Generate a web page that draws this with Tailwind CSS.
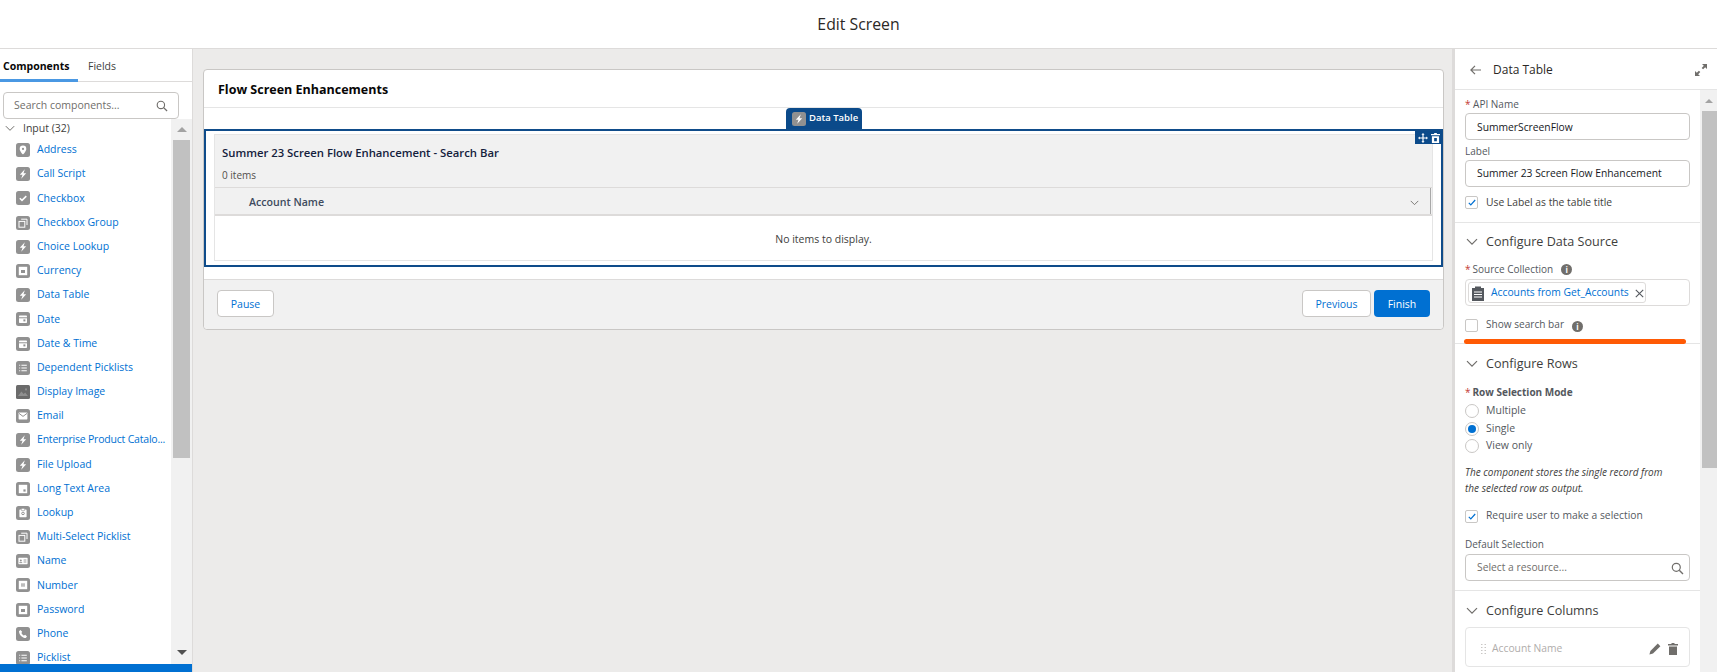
<!DOCTYPE html>
<html>
<head>
<meta charset="utf-8">
<script src="https://cdn.jsdelivr.net/npm/@tailwindcss/browser@4"></script>
<title>Edit Screen</title>
</head>
<body class="w-[1717px] h-[672px] overflow-hidden bg-white font-['Open_Sans',sans-serif] text-[10.5px] text-[#3e3e3c]">

<!-- hidden icon defs -->
<svg class="hidden">
  <symbol id="bolt" viewBox="0 0 14 14"><rect width="14" height="14" rx="2.5" fill="#919191"/><path d="M8.800 2.200 3.800 7.800h2.700L5.200 11.800 10.200 6.200H7.500z" fill="#fff"/></symbol>
  <symbol id="pin" viewBox="0 0 14 14"><rect width="14" height="14" rx="2.5" fill="#919191"/><path d="M7 2.6a3.3 3.3 0 0 0-3.3 3.3C3.700 8.300 7 11.400 7 11.400s3.300-3.100 3.300-5.500A3.300 3.300 0 0 0 7 2.600z" fill="#fff"/><circle cx="7" cy="5.900" r="1.100" fill="#919191"/></symbol>
  <symbol id="check" viewBox="0 0 14 14"><rect width="14" height="14" rx="2.500" fill="#919191"/><path d="m3.800 7.200 2.200 2.200 4.300-4.300" fill="none" stroke="#fff" stroke-width="1.500"/></symbol>
  <symbol id="group" viewBox="0 0 14 14"><rect width="14" height="14" rx="2.500" fill="#919191"/><rect x="3" y="5.400" width="5.800" height="5.800" fill="#919191" stroke="#fff"/><path d="M5.200 3.200h5.800v5.800" fill="none" stroke="#fff"/></symbol>
  <symbol id="box" viewBox="0 0 14 14"><rect width="14" height="14" rx="2.500" fill="#919191"/><rect x="2.800" y="2.800" width="8.400" height="8.400" fill="#fff"/><rect x="5" y="6" width="4" height="3" fill="#919191"/></symbol>
  <symbol id="corner" viewBox="0 0 14 14"><rect width="14" height="14" rx="2.500" fill="#919191"/><rect x="2.800" y="2.800" width="8.400" height="8.400" fill="#fff"/><rect x="7.400" y="7.400" width="2.200" height="2.200" fill="#919191"/></symbol>
  <symbol id="cal" viewBox="0 0 14 14"><rect width="14" height="14" rx="2.500" fill="#919191"/><rect x="3" y="3.400" width="8" height="7.600" rx=".8" fill="#fff"/><path d="M3 5.800h8" stroke="#919191"/><rect x="7.400" y="7.400" width="2" height="2" fill="#919191"/></symbol>
  <symbol id="list" viewBox="0 0 14 14"><rect width="14" height="14" rx="2.500" fill="#919191"/><path d="M5.400 4.300h5.400M5.400 7h5.400M5.400 9.700h5.400M3.200 4.300h1M3.200 7h1M3.200 9.700h1" stroke="#fff" stroke-width="1.100"/></symbol>
  <symbol id="image" viewBox="0 0 14 14"><rect width="14" height="14" rx="1.500" fill="#6b6b6b"/><path d="m2 11 3.400-4.400 2.200 2.400 1.600-1.600L12 11z" fill="#8f8f8f"/><circle cx="10" cy="4.400" r="1.100" fill="#8f8f8f"/></symbol>
  <symbol id="mail" viewBox="0 0 14 14"><rect width="14" height="14" rx="2.500" fill="#919191"/><rect x="2.600" y="3.600" width="8.800" height="6.800" rx=".6" fill="#fff"/><path d="m3 4.400 4 3 4-3" fill="none" stroke="#919191"/></symbol>
  <symbol id="clip" viewBox="0 0 14 14"><rect width="14" height="14" rx="2.500" fill="#919191"/><rect x="3.400" y="3.400" width="7.200" height="7.800" rx=".6" fill="#fff"/><rect x="5.200" y="2.400" width="3.600" height="2" fill="#fff" stroke="#919191" stroke-width=".5"/><circle cx="7" cy="7.400" r="1.300" fill="none" stroke="#919191"/></symbol>
  <symbol id="card" viewBox="0 0 14 14"><rect width="14" height="14" rx="2.500" fill="#919191"/><rect x="2.400" y="3.800" width="9.200" height="6.400" rx=".6" fill="#fff"/><circle cx="4.800" cy="6.400" r="1" fill="#919191"/><path d="M3.400 8.600h2.800M7.600 6h2.800M7.600 8h2.800" stroke="#919191" stroke-width=".9"/></symbol>
  <symbol id="num" viewBox="0 0 14 14"><rect width="14" height="14" rx="2.500" fill="#919191"/><rect x="2.800" y="2.800" width="8.400" height="8.400" fill="#fff"/><path d="M6 5v4M8 5v4M5 6.200h4M5 7.800h4" stroke="#919191" stroke-width=".6"/></symbol>
  <symbol id="phone" viewBox="0 0 14 14"><rect width="14" height="14" rx="2.500" fill="#919191"/><path d="M4.400 3 3 4.200c0 3.600 3.200 6.800 6.800 6.800L11 9.600 9.200 7.800 8 8.600C7 8.200 5.800 7 5.400 6l.8-1.200z" fill="#fff"/></symbol>
  <symbol id="search" viewBox="0 0 14 14"><circle cx="5.700" cy="5.700" r="4.300" fill="none" stroke="#706e6b" stroke-width="1.300"/><path d="m8.900 8.900 4 4" stroke="#706e6b" stroke-width="1.500"/></symbol>
  <symbol id="chev" viewBox="0 0 12 8"><path d="m1 1.200 5 5 5-5" fill="none" stroke="#706e6b" stroke-width="1.200"/></symbol>
</svg>

<!-- top title -->
<header class="h-[49px] pt-[2px] flex items-center justify-center border-b border-[#dddbda] text-[15.8px] text-[#2b2826]">Edit Screen</header>

<div class="flex h-[623px]">

  <!-- left panel -->
  <aside class="w-[192px] shrink-0 bg-white flex flex-col relative">
    <div class="h-[33px] flex border-b border-[#dddbda] text-[10.5px]">
      <div class="w-[78px] pl-[3px] font-bold text-[#080707] border-b-[3px] border-[#4a98e3] h-[33px] leading-[34px]">Components</div>
      <div class="pl-[10px] leading-[34px] text-[#3e3e3c]">Fields</div>
    </div>
    <div class="mx-[3px] mt-[10px] h-[27px] w-[176px] border border-[#c9c7c5] rounded-[4px] flex items-center justify-between pt-[1px] pl-[10px] pr-[10px] text-[10.5px] text-[#706e6b]">
      <span>Search components...</span>
      <svg class="w-[12px] h-[12px]"><use href="#search"/></svg>
    </div>
    <div class="flex flex-1 min-h-0">
      <ul class="flex-1 min-w-0 overflow-hidden text-[#0070d2]">
        <li class="h-[19px] flex items-center text-[#3e3e3c]"><svg class="ml-[5px] w-[10px] h-[7px]"><use href="#chev"/></svg><span class="ml-[8px]">Input (32)</span></li>
        <li class="h-[24.2px] flex items-center pl-[16px] gap-[7px]"><svg class="w-[14px] h-[14px]"><use href="#pin"/></svg>Address</li>
        <li class="h-[24.2px] flex items-center pl-[16px] gap-[7px]"><svg class="w-[14px] h-[14px]"><use href="#bolt"/></svg>Call Script</li>
        <li class="h-[24.2px] flex items-center pl-[16px] gap-[7px]"><svg class="w-[14px] h-[14px]"><use href="#check"/></svg>Checkbox</li>
        <li class="h-[24.2px] flex items-center pl-[16px] gap-[7px]"><svg class="w-[14px] h-[14px]"><use href="#group"/></svg>Checkbox Group</li>
        <li class="h-[24.2px] flex items-center pl-[16px] gap-[7px]"><svg class="w-[14px] h-[14px]"><use href="#bolt"/></svg>Choice Lookup</li>
        <li class="h-[24.2px] flex items-center pl-[16px] gap-[7px]"><svg class="w-[14px] h-[14px]"><use href="#box"/></svg>Currency</li>
        <li class="h-[24.2px] flex items-center pl-[16px] gap-[7px]"><svg class="w-[14px] h-[14px]"><use href="#bolt"/></svg>Data Table</li>
        <li class="h-[24.2px] flex items-center pl-[16px] gap-[7px]"><svg class="w-[14px] h-[14px]"><use href="#cal"/></svg>Date</li>
        <li class="h-[24.2px] flex items-center pl-[16px] gap-[7px]"><svg class="w-[14px] h-[14px]"><use href="#cal"/></svg>Date &amp; Time</li>
        <li class="h-[24.2px] flex items-center pl-[16px] gap-[7px]"><svg class="w-[14px] h-[14px]"><use href="#list"/></svg>Dependent Picklists</li>
        <li class="h-[24.2px] flex items-center pl-[16px] gap-[7px]"><svg class="w-[14px] h-[14px]"><use href="#image"/></svg>Display Image</li>
        <li class="h-[24.2px] flex items-center pl-[16px] gap-[7px]"><svg class="w-[14px] h-[14px]"><use href="#mail"/></svg>Email</li>
        <li class="h-[24.2px] flex items-center pl-[16px] gap-[7px] tracking-[-0.2px] whitespace-nowrap"><svg class="w-[14px] h-[14px]"><use href="#bolt"/></svg>Enterprise Product Catalo...</li>
        <li class="h-[24.2px] flex items-center pl-[16px] gap-[7px]"><svg class="w-[14px] h-[14px]"><use href="#bolt"/></svg>File Upload</li>
        <li class="h-[24.2px] flex items-center pl-[16px] gap-[7px]"><svg class="w-[14px] h-[14px]"><use href="#corner"/></svg>Long Text Area</li>
        <li class="h-[24.2px] flex items-center pl-[16px] gap-[7px]"><svg class="w-[14px] h-[14px]"><use href="#clip"/></svg>Lookup</li>
        <li class="h-[24.2px] flex items-center pl-[16px] gap-[7px]"><svg class="w-[14px] h-[14px]"><use href="#group"/></svg>Multi-Select Picklist</li>
        <li class="h-[24.2px] flex items-center pl-[16px] gap-[7px]"><svg class="w-[14px] h-[14px]"><use href="#card"/></svg>Name</li>
        <li class="h-[24.2px] flex items-center pl-[16px] gap-[7px]"><svg class="w-[14px] h-[14px]"><use href="#num"/></svg>Number</li>
        <li class="h-[24.2px] flex items-center pl-[16px] gap-[7px]"><svg class="w-[14px] h-[14px]"><use href="#box"/></svg>Password</li>
        <li class="h-[24.2px] flex items-center pl-[16px] gap-[7px]"><svg class="w-[14px] h-[14px]"><use href="#phone"/></svg>Phone</li>
        <li class="h-[24.2px] flex items-center pl-[16px] gap-[7px]"><svg class="w-[14px] h-[14px]"><use href="#list"/></svg>Picklist</li>
      </ul>
      <!-- scrollbar -->
      <div class="w-[21px] shrink-0 bg-[#f1f1f1] flex flex-col items-center px-[2px]">
        <div class="h-[21px] flex items-center"><div class="w-0 h-0 border-x-[5px] border-x-transparent border-b-[5px] border-b-[#a3a3a3]"></div></div>
        <div class="w-[17px] h-[318px] bg-[#c1c1c1]"></div>
        <div class="flex-1"></div>
        <div class="h-[22px]"><div class="w-0 h-0 border-x-[5px] border-x-transparent border-t-[5px] border-t-[#505050]"></div></div>
      </div>
    </div>
    <div class="absolute bottom-0 left-0 w-[192px] h-[8px] bg-[#0070d2]"></div>
  </aside>

  <!-- canvas -->
  <main class="flex-1 min-w-0 bg-[#ecebea] border-l border-[#dddbda] pl-[10px] pt-[20px]">
    <div class="w-[1241px] rounded-[4px] border border-[#c9c7c5] bg-white">
      <div class="h-[38px] pt-[3px] border-b border-[#e5e5e5] pl-[14px] flex items-center text-[12.5px] font-bold text-[#080707]">Flow Screen Enhancements</div>
      <div class="relative h-[21px]">
        <div class="absolute left-[582px] top-0 h-[21px] w-[76px] rounded-t-[4px] bg-[#0b4a8a] text-white text-[9.5px] font-semibold flex items-center pl-[6px] gap-[3px]"><svg class="w-[14px] h-[14px]"><use href="#bolt"/></svg>Data Table</div>
      </div>
      <div class="relative border-2 border-[#0f4c8a] h-[138px] pt-[3px] px-[8px]">
        <div class="absolute right-[-1px] top-0 w-[27px] h-[13px] bg-[#0b4a8a] flex items-center justify-center gap-[3px]">
          <svg class="w-[10px] h-[10px]" viewBox="0 0 10 10"><path d="M5 0 3.400 1.800h1v2.600H1.800v-1L0 5l1.800 1.600v-1h2.600v2.600h-1L5 10l1.600-1.800h-1V5.600h2.600v1L10 5 8.200 3.400v1H5.600V1.800h1z" fill="#fff"/></svg>
          <svg class="w-[9px] h-[10px]" viewBox="0 0 10 11"><path fill-rule="evenodd" d="M3.500 0h3v1H10v1.500H0V1h3.500zM1 3.500h8V11H1zM3.500 5.500v3.500h3V5.500z" fill="#fff"/></svg>
        </div>
        <div class="border border-[#e5e5e5] h-[127px] flex flex-col">
          <div class="bg-[#f1f1f1] h-[52px] pl-[7px] pt-[11px] shrink-0">
            <div class="text-[11.3px] font-semibold leading-[14px] text-[#14213d]">Summer 23 Screen Flow Enhancement - Search Bar</div>
            <div class="mt-[9px] text-[10px] leading-[12px] text-[#514f4d]">0 items</div>
          </div>
          <div class="h-[29px] shrink-0 bg-[#f1f1f1] border-t border-t-[#dddbda] border-b-2 border-b-[#dddbda] flex items-center">
            <div class="flex-1 h-full flex items-center justify-between pt-[3px] pl-[34px] pr-[11px] mr-[1px] border-r border-r-[#a8a8a8] text-[10.6px] font-semibold text-[#3e4b5e]">
              <span>Account Name</span>
              <svg class="w-[9px] h-[6px]"><use href="#chev"/></svg>
            </div>
          </div>
          <div class="flex-1 pt-[4px] flex items-center justify-center text-[10.5px] text-[#3e3e3c]">No items to display.</div>
        </div>
      </div>
      <div class="mt-[12px] h-[50px] bg-[#f1f1f1] border-t border-[#dddbda] rounded-b-[4px] px-[13px] pt-[10px] flex items-start justify-between">
        <div class="w-[57px] h-[27px] pt-[3px] bg-white border border-[#c9c7c5] rounded-[4px] flex items-center justify-center text-[10.5px] text-[#0070d2]">Pause</div>
        <div class="flex gap-[3px]">
          <div class="w-[69px] h-[27px] pt-[3px] bg-white border border-[#c9c7c5] rounded-[4px] flex items-center justify-center text-[10.5px] text-[#0070d2]">Previous</div>
          <div class="w-[56px] h-[27px] pt-[3px] bg-[#0070d2] rounded-[4px] flex items-center justify-center text-[10.5px] text-white">Finish</div>
        </div>
      </div>
    </div>
  </main>

  <!-- right panel -->
  <aside class="w-[265px] shrink-0 bg-white border-l-[3px] border-[#dddbda] flex flex-col">
    <div class="h-[41px] pt-[1px] shrink-0 border-b border-[#e5e5e5] flex items-center justify-between pl-[15px] pr-[10px]">
      <div class="flex items-center gap-[12px] text-[12px] text-[#2b2826]">
        <svg class="w-[11px] h-[10px]" viewBox="0 0 11 10"><path d="M5 .8.9 5 5 9.200M1 5h10" fill="none" stroke="#706e6b" stroke-width="1.200"/></svg>
        Data Table
      </div>
      <svg class="w-[12px] h-[12px]" viewBox="0 0 12 12"><path d="M7 0h5v5l-1.800-1.800-2.100 2.100-1.400-1.400 2.100-2.100zM5 12H0V7l1.800 1.800 2.100-2.100 1.400 1.400-2.100 2.100z" fill="#706e6b"/></svg>
    </div>
    <div class="flex flex-1 min-h-0">
      <div class="flex-1 min-w-0 overflow-hidden">
        <div class="h-[133px] px-[10px] pt-[7px] border-b border-[#e5e5e5]">
          <div class="text-[10px] leading-[14px] text-[#54585e]"><span class="text-[#c23934]">* </span>API Name</div>
          <div class="mt-[2px] h-[27px] pt-[2px] border border-[#c9c7c5] rounded-[4px] pl-[11px] flex items-center text-[10.3px] text-[#16181d]">SummerScreenFlow</div>
          <div class="mt-[4px] text-[10px] leading-[14px] text-[#54585e]">Label</div>
          <div class="mt-[2px] h-[27px] border border-[#c9c7c5] rounded-[4px] pl-[11px] flex items-center text-[10.3px] text-[#16181d] whitespace-nowrap">Summer 23 Screen Flow Enhancement</div>
          <div class="mt-[9px] flex items-center gap-[8px] text-[10.3px] h-[13px]">
            <span class="w-[13px] h-[13px] border border-[#c9c7c5] rounded-[2px] flex items-center justify-center"><svg class="w-[8px] h-[7px]" viewBox="0 0 8 7"><path d="m.8 3.800 2 2 4.400-4.800" fill="none" stroke="#0070d2" stroke-width="1.200"/></svg></span>
            Use Label as the table title
          </div>
        </div>
        <div class="relative h-[121px] px-[10px] pt-[10px] border-b border-[#e5e5e5]">
          <div class="flex items-center gap-[8px] text-[12.6px] leading-[18px] text-[#3e3e3c]"><svg class="ml-[1px] w-[12px] h-[8px]"><use href="#chev"/></svg>Configure Data Source</div>
          <div class="mt-[11px] flex items-center text-[10px] leading-[14px] text-[#54585e]"><span class="text-[#c23934] mr-[2px]">*</span>Source Collection<span class="ml-[8px] w-[11px] h-[11px] rounded-full bg-[#706e6b] text-white text-[8px] leading-[11px] font-bold text-center">i</span></div>
          <div class="mt-[3px] h-[27px] border border-[#dddbda] rounded-[4px] flex items-center pl-[2px]">
            <div class="h-[21px] w-[178px] pt-[1px] border border-[#dddbda] rounded-[3px] flex items-center pl-[2px] text-[10.3px] text-[#0070d2]">
              <svg class="w-[14px] h-[15px] shrink-0 mr-[6px]" viewBox="0 0 14 15"><path d="M1 2h3V.6h6V2h3v13H1z" fill="#54585e"/><path d="M3 6h8M3 8.500h8M3 11h8" stroke="#fff"/></svg>
              <span class="whitespace-nowrap">Accounts from Get_Accounts</span>
              <svg class="ml-[6px] w-[9px] h-[9px] shrink-0" viewBox="0 0 9 9"><path d="m.8.8 7.400 7.400M8.200.8.800 8.200" stroke="#54585e" stroke-width="1.100"/></svg>
            </div>
          </div>
          <div class="mt-[12px] flex items-center gap-[8px] text-[10.1px] h-[14px] text-[#54585e]">
            <span class="w-[13px] h-[13px] border border-[#c9c7c5] rounded-[2px]"></span>
            Show search bar
            <span class="mt-[2px] w-[11px] h-[11px] rounded-full bg-[#706e6b] text-white text-[8px] leading-[11px] font-bold text-center">i</span>
          </div>
          <div class="absolute left-[9px] bottom-[-1px] w-[222px] h-[5px] rounded-full bg-[#ff5a05]"></div>
        </div>
        <div class="h-[247px] px-[10px] pt-[11px] border-b border-[#e5e5e5]">
          <div class="flex items-center gap-[8px] text-[12.6px] leading-[18px]"><svg class="ml-[1px] w-[12px] h-[8px]"><use href="#chev"/></svg>Configure Rows</div>
          <div class="mt-[12px] text-[10px] leading-[14px] font-bold text-[#54585e]"><span class="text-[#c23934] font-normal mr-[2px]">*</span>Row Selection Mode</div>
          <div class="mt-[3px] flex items-center gap-[7px] h-[18px]"><span class="w-[14px] h-[14px] rounded-full border border-[#c9c7c5]"></span><span class="text-[#54585e]">Multiple</span></div>
          <div class="flex items-center gap-[7px] h-[18px]"><span class="w-[14px] h-[14px] rounded-full border border-[#c9c7c5] flex items-center justify-center"><span class="w-[8px] h-[8px] rounded-full bg-[#0070d2]"></span></span><span class="text-[#54585e]">Single</span></div>
          <div class="flex items-center gap-[7px] h-[16px]"><span class="w-[14px] h-[14px] rounded-full border border-[#c9c7c5]"></span><span class="text-[#54585e]">View only</span></div>
          <p class="mt-[10px] text-[10px] leading-[16px] italic text-[#3e3e3c] whitespace-nowrap">The component stores the single record from<br>the selected row as output.</p>
          <div class="mt-[13px] flex items-center gap-[8px] h-[14px] text-[10.3px] text-[#54585e]">
            <span class="w-[13px] h-[13px] border border-[#c9c7c5] rounded-[2px] flex items-center justify-center"><svg class="w-[8px] h-[7px]" viewBox="0 0 8 7"><path d="m.8 3.800 2 2 4.400-4.800" fill="none" stroke="#0070d2" stroke-width="1.200"/></svg></span>
            Require user to make a selection
          </div>
          <div class="mt-[14px] text-[10px] leading-[14px] text-[#54585e]">Default Selection</div>
          <div class="mt-[3px] h-[27px] pt-[1px] border border-[#c9c7c5] rounded-[4px] pl-[11px] pr-[5px] flex items-center justify-between text-[10.3px] text-[#706e6b]">Select a resource...<svg class="w-[13px] h-[13px]"><use href="#search"/></svg></div>
        </div>
        <div class="px-[10px] pt-[11px]">
          <div class="flex items-center gap-[8px] text-[12.6px] leading-[18px]"><svg class="ml-[1px] w-[12px] h-[8px]"><use href="#chev"/></svg>Configure Columns</div>
          <div class="mt-[7px] h-[40px] pt-[4px] border border-[#e5e5e5] rounded-[4px] flex items-center pl-[15px] pr-[11px] justify-between text-[10.3px] text-[#b0adab]">
            <span class="flex items-center gap-[6px]">
              <svg class="w-[5px] h-[10px]" viewBox="0 0 5 10"><path d="M0 .5h1.500M3.500.5H5M0 3.500h1.500M3.500 3.500H5M0 6.500h1.500M3.500 6.500H5M0 9.500h1.500M3.500 9.500H5" stroke="#c9c7c5"/></svg>
              Account Name
            </span>
            <span class="flex items-center gap-[7px]">
              <svg class="w-[12px] h-[12px]" viewBox="0 0 12 12"><path d="M8.800.6 11.400 3.200 4 10.600.4 11.600 1.400 8z" fill="#706e6b"/></svg>
              <svg class="w-[10px] h-[12px]" viewBox="0 0 10 12"><path d="M3.500 0h3v1H10v1.500H0V1h3.500zM1 3.500h8V12H1z" fill="#706e6b"/></svg>
            </span>
          </div>
        </div>
      </div>
      <!-- scrollbar -->
      <div class="w-[17px] shrink-0 bg-[#f1f1f1] flex flex-col items-stretch">
        <div class="h-[21px] flex items-center justify-center"><div class="w-0 h-0 border-x-[4px] border-x-transparent border-b-[4px] border-b-[#a3a3a3]"></div></div>
        <div class="h-[357px] ml-[2px] bg-[#c1c1c1]"></div>
      </div>
    </div>
  </aside>
</div>
</body>
</html>
